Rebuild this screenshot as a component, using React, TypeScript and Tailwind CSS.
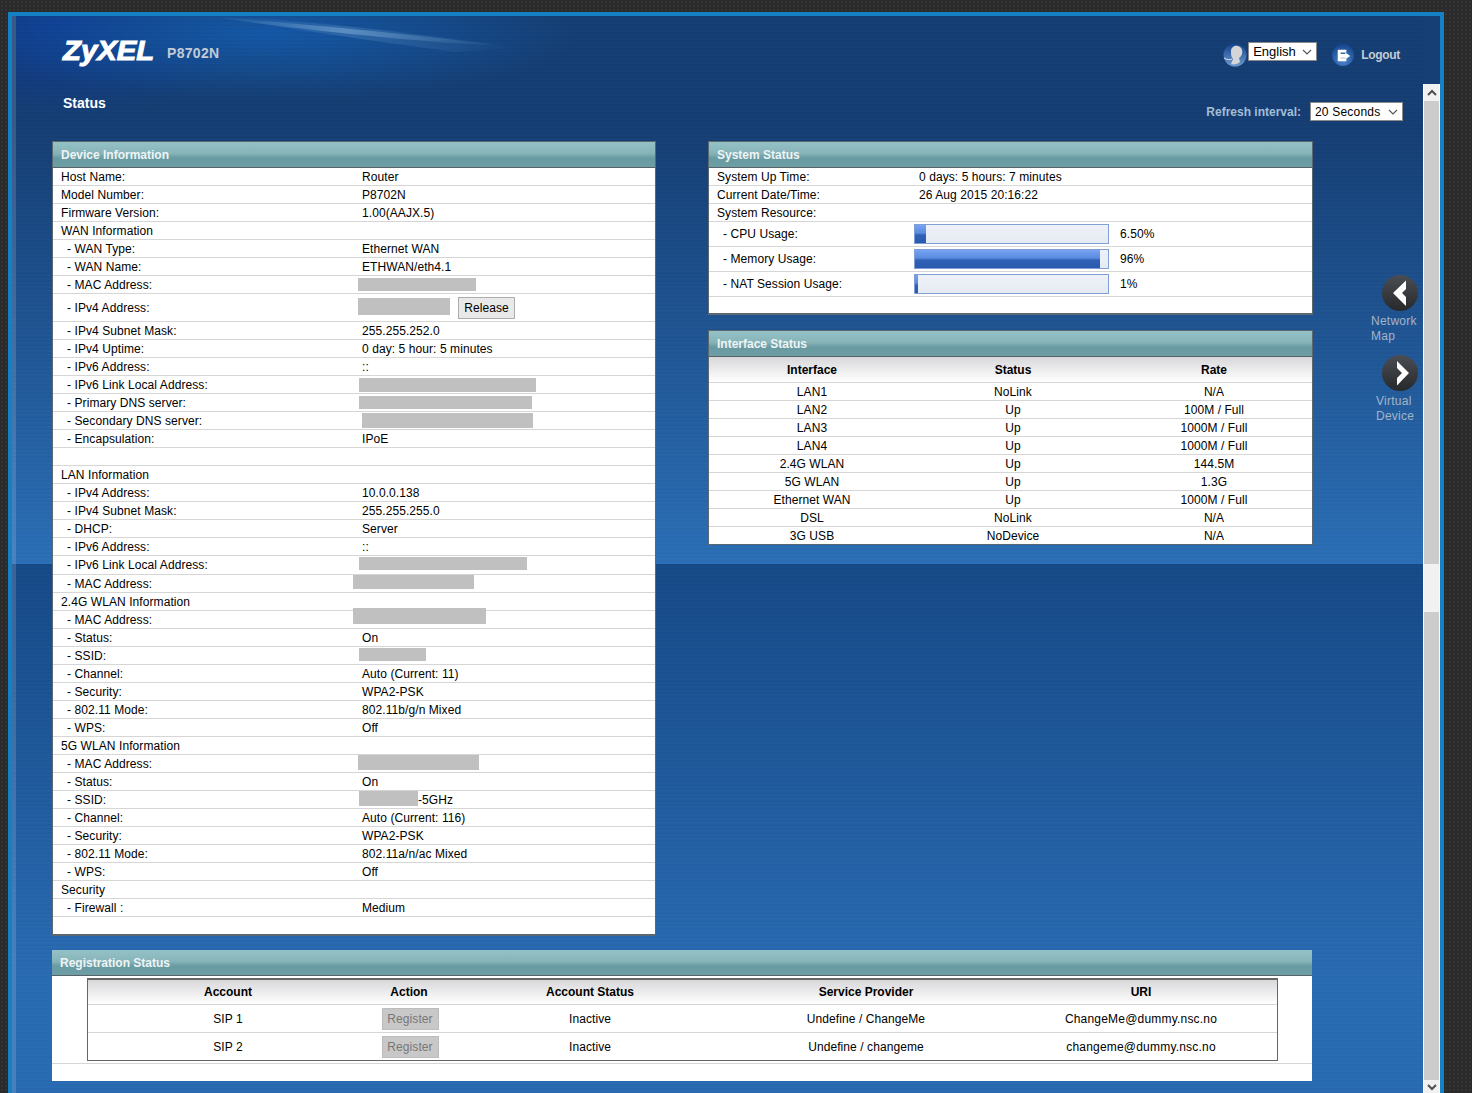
import React from "react";

type Seg = { c: string; after?: string };
type Row = { l?: string; sub?: boolean; v?: string; h?: string; red?: Seg; btn?: boolean };

const device: Row[] = [
  { l: "Host Name:", v: "Router" },
  { l: "Model Number:", v: "P8702N" },
  { l: "Firmware Version:", v: "1.00(AAJX.5)" },
  { l: "WAN Information" },
  { l: "- WAN Type:", sub: true, v: "Ethernet WAN" },
  { l: "- WAN Name:", sub: true, v: "ETHWAN/eth4.1" },
  { l: "- MAC Address:", sub: true, red: { c: "ml-[-4px] w-[118px] h-[13px]" } },
  { l: "- IPv4 Address:", sub: true, h: "h-[28px]", red: { c: "ml-[-4px] w-[92px] h-[17px] mb-[2px]" }, btn: true },
  { l: "- IPv4 Subnet Mask:", sub: true, v: "255.255.252.0" },
  { l: "- IPv4 Uptime:", sub: true, v: "0 day: 5 hour: 5 minutes" },
  { l: "- IPv6 Address:", sub: true, v: "::" },
  { l: "- IPv6 Link Local Address:", sub: true, red: { c: "ml-[-3px] w-[177px] h-[14px]" } },
  { l: "- Primary DNS server:", sub: true, red: { c: "ml-[-3px] w-[173px] h-[13px]" } },
  { l: "- Secondary DNS server:", sub: true, red: { c: "ml-0 w-[171px] h-[15px]" } },
  { l: "- Encapsulation:", sub: true, v: "IPoE" },
  {},
  { l: "LAN Information" },
  { l: "- IPv4 Address:", sub: true, v: "10.0.0.138" },
  { l: "- IPv4 Subnet Mask:", sub: true, v: "255.255.255.0" },
  { l: "- DHCP:", sub: true, v: "Server" },
  { l: "- IPv6 Address:", sub: true, v: "::" },
  { l: "- IPv6 Link Local Address:", sub: true, h: "h-[19px]", red: { c: "ml-[-3px] w-[168px] h-[13px] mb-[4px]" } },
  { l: "- MAC Address:", sub: true, red: { c: "ml-[-9px] w-[121px] h-[14px] mb-[3px]" } },
  { l: "2.4G WLAN Information" },
  { l: "- MAC Address:", sub: true, red: { c: "ml-[-9px] w-[133px] h-[16px] mb-[8px]" } },
  { l: "- Status:", sub: true, v: "On" },
  { l: "- SSID:", sub: true, red: { c: "ml-[-3px] w-[67px] h-[13px] mb-[2px]" } },
  { l: "- Channel:", sub: true, v: "Auto (Current: 11)" },
  { l: "- Security:", sub: true, v: "WPA2-PSK" },
  { l: "- 802.11 Mode:", sub: true, v: "802.11b/g/n Mixed" },
  { l: "- WPS:", sub: true, v: "Off" },
  { l: "5G WLAN Information" },
  { l: "- MAC Address:", sub: true, red: { c: "ml-[-4px] w-[121px] h-[15px] mb-[2px]" } },
  { l: "- Status:", sub: true, v: "On" },
  { l: "- SSID:", sub: true, red: { c: "ml-[-3px] w-[59px] h-[15px] mb-[2px]", after: "-5GHz" } },
  { l: "- Channel:", sub: true, v: "Auto (Current: 116)" },
  { l: "- Security:", sub: true, v: "WPA2-PSK" },
  { l: "- 802.11 Mode:", sub: true, v: "802.11a/n/ac Mixed" },
  { l: "- WPS:", sub: true, v: "Off" },
  { l: "Security" },
  { l: "- Firewall :", sub: true, v: "Medium" },
];

const ifaces = [
  ["LAN1", "NoLink", "N/A"],
  ["LAN2", "Up", "100M / Full"],
  ["LAN3", "Up", "1000M / Full"],
  ["LAN4", "Up", "1000M / Full"],
  ["2.4G WLAN", "Up", "144.5M"],
  ["5G WLAN", "Up", "1.3G"],
  ["Ethernet WAN", "Up", "1000M / Full"],
  ["DSL", "NoLink", "N/A"],
  ["3G USB", "NoDevice", "N/A"],
];

const sip = [
  ["SIP 1", "Inactive", "Undefine / ChangeMe", "ChangeMe@dummy.nsc.no"],
  ["SIP 2", "Inactive", "Undefine / changeme", "changeme@dummy.nsc.no"],
];

const resources = [
  ["- CPU Usage:", "w-[11px]", "6.50%"],
  ["- Memory Usage:", "w-[185px]", "96%"],
  ["- NAT Session Usage:", "w-[3px]", "1%"],
];

function PanelHead({ title }: { title: string }) {
  return (
    <div className="flex h-[26px] items-center border-b border-[#566268] bg-[linear-gradient(#94c2c6,#86b4b9_45%,#689aa2_65%,#6e9ea5)] pl-2 text-[12px] font-bold tracking-normal text-[#eef4f4]">
      {title}
    </div>
  );
}

function Chevron() {
  return (
    <svg width="10" height="10" viewBox="0 0 10 10" className="shrink-0">
      <path d="M1 3l4 4 4-4" fill="none" stroke="#555" strokeWidth="1.1" />
    </svg>
  );
}

function NavCircle({ dir }: { dir: "l" | "r" }) {
  return (
    <svg width="36" height="36" viewBox="0 0 36 36">
      <defs>
        <linearGradient id={"nc" + dir} x1="0" y1="0" x2="0" y2="1">
          <stop offset="0" stopColor="#4a4d52" />
          <stop offset="1" stopColor="#27292c" />
        </linearGradient>
      </defs>
      <circle cx="18" cy="18" r="18" fill={"url(#nc" + dir + ")"} />
      {dir === "l" ? (
        <path d="M11 18 L24 5.5 V14 L20 18 L24 22 V31 Z" fill="#fff" />
      ) : (
        <path d="M27 18 L15 6 V13 L20 18 L15 23 V30.5 Z" fill="#fff" />
      )}
    </svg>
  );
}

export default function App() {
  return (
    <div className="h-[1093px] w-[1472px] overflow-hidden bg-[#2a2a2a] bg-[radial-gradient(#353535_1px,transparent_1px)] bg-size-[4px_4px] pl-2 pt-3 [font-family:Liberation_Sans,Arial,sans-serif] text-[12px] tracking-[0.08px] text-black">
      <div className="flex h-[1081px] w-[1436px] border-x-4 border-t-4 border-[#1580c4] bg-[#163f75]">
        <div className="relative w-[1411px] border-l-4 border-white/15 bg-[linear-gradient(rgba(0,0,0,0.03)_50%,transparent_50%),radial-gradient(ellipse_310px_66px_at_250px_18px,#1559a8,transparent),radial-gradient(ellipse_200px_90px_at_40px_10px,#0f3a90,transparent),linear-gradient(#163f75_0,#163f75_110px,#2c70b8_548px,#174a88_548px,#2a6cb4_960px)] bg-size-[100%_4px,100%_100%,100%_100%,100%_100%]">
          {/* swoosh over the header background */}
          <svg width="320" height="40" viewBox="0 0 320 40" className="pointer-events-none absolute left-[190px] top-0">
            <defs>
              <linearGradient id="sw" x1="0" y1="0" x2="1" y2="0">
                <stop offset="0" stopColor="#9cc8e8" stopOpacity="0" />
                <stop offset="0.45" stopColor="#9cc8e8" stopOpacity="0.4" />
                <stop offset="1" stopColor="#9cc8e8" stopOpacity="0" />
              </linearGradient>
            </defs>
            <path d="M5 1 C100 8 220 20 300 30 C210 26 100 14 5 1 Z" fill="url(#sw)" />
            <path d="M5 0 C100 4 220 18 310 32 L250 36 C170 26 80 12 5 0 Z" fill="url(#sw)" opacity="0.45" />
          </svg>

          {/* header */}
          <div className="relative flex h-[74px] items-center justify-between pl-[47px] pr-[23px] tracking-normal">
            <div className="flex items-center">
              <div className="mt-[-3px] w-[104px]">
                <span className="block origin-left scale-x-[1.085] text-[27px] font-bold italic leading-none text-white [-webkit-text-stroke:1px_white]">
                  ZyXEL
                </span>
              </div>
              <span className="text-[14px] font-bold tracking-[0.3px] text-[#c3ccd4]">P8702N</span>
            </div>
            <div className="mt-1 flex items-center">
              <svg width="24" height="24" viewBox="0 0 24 24">
                <defs>
                  <linearGradient id="av" x1="0" y1="0" x2="0" y2="1">
                    <stop offset="0" stopColor="#12408a" />
                    <stop offset="1" stopColor="#6f9bd0" />
                  </linearGradient>
                </defs>
                <circle cx="12" cy="12" r="11.5" fill="url(#av)" />
                <path d="M8 8c0-4 4-6 7-5 4 1 5 5 4 8-.5 2-2 3-3 4l1 4c-2 2-6 3-9 2l2-5c-2-2-2-5-2-8z" fill="#d3d5d8" />
                <path d="M1 15c3 2 6 2 8 1" fill="none" stroke="#fff" strokeWidth="0.8" />
              </svg>
              <div className="ml-px mt-[-7px] flex h-[19px] w-[69px] items-center justify-between border border-[#8a8a8a] bg-white pl-1 pr-1 text-[13px]">
                <span>English</span>
                <Chevron />
              </div>
              <svg width="22" height="22" viewBox="0 0 23 23" className="ml-[15px]">
                <defs>
                  <radialGradient id="lo" cx="0.5" cy="0.75" r="0.8">
                    <stop offset="0" stopColor="#4f86d0" />
                    <stop offset="1" stopColor="#103f86" />
                  </radialGradient>
                </defs>
                <circle cx="11.5" cy="11.5" r="11.5" fill="url(#lo)" />
                <path d="M6 6h9v3h-6v1.5h5V9l0 0 5 3.5-5 3.5v-1.5h-5V15h6v3H6z" fill="#fff" />
              </svg>
              <span className="ml-[7px] text-[12px] font-bold tracking-[-0.3px] text-[#c3ccd4]">Logout</span>
            </div>
          </div>
          <div className="relative flex h-[51px] justify-between pl-[47px] pr-[20px] tracking-normal">
            <span className="pt-[3px] text-[14px] font-bold leading-[20px] text-white">Status</span>
            <div className="mt-3 flex h-[19px] items-center">
              <span className="mr-[9px] text-[12px] font-bold text-[#a3bdd6]">Refresh interval:</span>
              <div className="flex h-[19px] w-[93px] items-center justify-between border border-[#8a8a8a] bg-white pl-1 pr-1 text-[12px] tracking-[0.2px]">
                <span>20 Seconds</span>
                <Chevron />
              </div>
            </div>
          </div>

          {/* body */}
          <div className="pl-9">
            <div className="flex">
              <div className="h-[795px] w-[604px] border border-b-2 border-[#5b6870] bg-white">
                <PanelHead title="Device Information" />
                {device.map((r, i) => (
                  <div key={i} className={"flex items-center border-b border-[#d6d6d6] pl-2 " + (r.h ?? "h-[18px]")}>
                    <div className={"w-[301px] shrink-0 " + (r.sub ? "pl-[6px]" : "")}>{r.l}</div>
                    <div className="flex items-center">
                      {r.v && <span>{r.v}</span>}
                      {r.red && <span className={"block shrink-0 bg-[#c0c0c0] " + r.red.c} />}
                      {r.red?.after && <span>{r.red.after}</span>}
                      {r.btn && (
                        <span className="ml-2 flex h-[22px] w-[57px] items-center justify-center border border-[#adadad] bg-[#e9e9e9]">
                          Release
                        </span>
                      )}
                    </div>
                  </div>
                ))}
              </div>

              <div className="ml-[52px] w-[605px]">
                <div className="h-[174px] border border-b-2 border-[#5b6870] bg-white">
                  <PanelHead title="System Status" />
                  {[
                    ["System Up Time:", "0 days: 5 hours: 7 minutes"],
                    ["Current Date/Time:", "26 Aug 2015 20:16:22"],
                    ["System Resource:", ""],
                  ].map((r) => (
                    <div key={r[0]} className="flex h-[18px] items-center border-b border-[#d6d6d6] pl-2">
                      <div className="w-[202px] shrink-0">{r[0]}</div>
                      <div>{r[1]}</div>
                    </div>
                  ))}
                  {resources.map((r) => (
                    <div key={r[0]} className="flex h-[25px] items-center border-b border-[#d6d6d6] pl-2">
                      <div className="w-[197px] shrink-0 pl-[6px]">{r[0]}</div>
                      <div className="h-[20px] w-[195px] border border-[#7f9fd6] bg-[linear-gradient(#eef1f7,#e6ebf3)]">
                        <div className={"h-full bg-[linear-gradient(#77a3f2,#5a8be0_45%,#2f62b8_55%,#2a5aae)] " + r[1]} />
                      </div>
                      <div className="ml-[11px]">{r[2]}</div>
                    </div>
                  ))}
                </div>

                <div className="mt-[15px] border border-[#5b6870] bg-white">
                  <PanelHead title="Interface Status" />
                  <div className="grid h-[26px] grid-cols-[200px_202px_200px] items-center border-b border-[#d6d6d6] bg-[linear-gradient(#d8d8da,#ffffff)] pl-[3px] text-center font-bold tracking-normal">
                    <div>Interface</div>
                    <div>Status</div>
                    <div>Rate</div>
                  </div>
                  {ifaces.map((r, i) => (
                    <div key={r[0]} className={"grid grid-cols-[200px_202px_200px] items-center pl-[3px] text-center " + (i < ifaces.length - 1 ? "h-[18px] border-b border-[#d6d6d6]" : "h-[17px]")}>
                      <div>{r[0]}</div>
                      <div>{r[1]}</div>
                      <div>{r[2]}</div>
                    </div>
                  ))}
                </div>
              </div>

              <div className="ml-[58px] flex flex-col pt-[134px] text-[12px] leading-[15px] tracking-[0.25px] text-[#a3b4c8]">
                <div className="ml-[11px]"><NavCircle dir="l" /></div>
                <div className="mt-[3px]">Network<br />Map</div>
                <div className="ml-[11px] mt-[11px]"><NavCircle dir="r" /></div>
                <div className="ml-[5px] mt-[3px]">Virtual<br />Device</div>
              </div>
            </div>

            <div className="mt-[14px] h-[131px] w-[1260px] bg-white">
              <PanelHead title="Registration Status" />
              <div className="pl-[35px] pt-[2px]">
                <div className="w-[1191px] border border-t-2 border-[#666]">
                  <div className="grid h-[25px] grid-cols-[280px_82px_280px_272px_1fr] items-center border-b border-[#d6d6d6] bg-[linear-gradient(#d8d8da,#ffffff)] text-center font-bold tracking-normal">
                    <div>Account</div>
                    <div>Action</div>
                    <div>Account Status</div>
                    <div>Service Provider</div>
                    <div className="pl-[3px]">URI</div>
                  </div>
                  {sip.map((r, i) => (
                    <div key={r[0]} className={"grid grid-cols-[280px_82px_280px_272px_1fr] items-center text-center " + (i === 0 ? "h-[28px] border-b border-[#d6d6d6]" : "h-[27px]")}>
                      <div>{r[0]}</div>
                      <div className="flex justify-center pl-[2px]">
                        <span className="flex h-[22px] w-[57px] items-center justify-center border border-[#bcbcbc] bg-[#c8c8c8] text-[#777]">
                          Register
                        </span>
                      </div>
                      <div>{r[1]}</div>
                      <div>{r[2]}</div>
                      <div className="pl-[3px] tracking-[0.2px]">{r[3]}</div>
                    </div>
                  ))}
                </div>
              </div>
              <div className="mt-[2px] border-b border-[#d6d6d6]" />
            </div>
          </div>
        </div>

        {/* scrollbar */}
        <div className="mt-[68px] flex w-[17px] flex-col border-x border-white bg-[#cccccc]">
          <div className="flex h-[17px] items-center justify-center bg-[#f1f1f1]">
            <svg width="10" height="8" viewBox="0 0 10 8"><path d="M1 6l4-4 4 4" fill="none" stroke="#505050" strokeWidth="2" /></svg>
          </div>
          <div className="h-[463px]" />
          <div className="h-[48px] bg-[#f1f1f1]" />
          <div className="flex-1" />
          <div className="flex h-[13px] items-start justify-center bg-[#f1f1f1] pt-[3px]">
            <svg width="10" height="8" viewBox="0 0 10 8"><path d="M1 2l4 4 4-4" fill="none" stroke="#505050" strokeWidth="2" /></svg>
          </div>
        </div>
      </div>
    </div>
  );
}
